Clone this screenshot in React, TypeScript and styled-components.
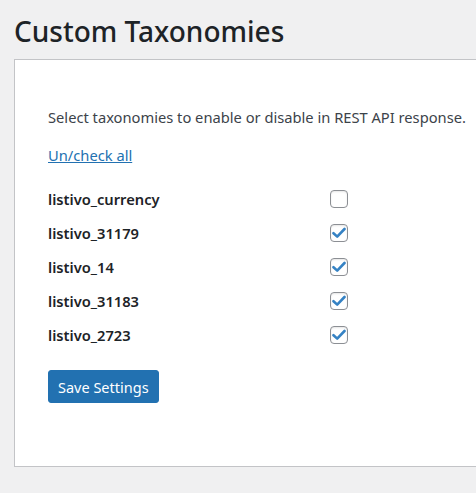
import styled, { createGlobalStyle } from 'styled-components';

const GlobalStyle = createGlobalStyle`
  html, body {
    margin: 0;
    padding: 0;
    background: #f0f0f1;
    overflow: hidden;
  }
  body {
    font-family: "Noto Sans", "Open Sans", sans-serif;
    color: #1d2327;
  }
`;

const Wrap = styled.div`
  padding: 14px 0 0 14px;
  width: 520px;
`;

const Title = styled.h1`
  font-size: 28px;
  font-weight: 500;
  line-height: 34px;
  margin: 0 0 11px;
  color: #1d2327;
`;

const Panel = styled.div`
  background: #fff;
  border: 1px solid #c3c4c7;
  padding: 47px 33px 42px;
  min-height: 317px;
`;

const Description = styled.p`
  font-size: 14.7px;
  line-height: 20px;
  margin: 0 0 17px;
  color: #3c434a;
`;

const ToggleLink = styled.a`
  display: inline-block;
  font-size: 14.7px;
  line-height: 20px;
  color: #2271b1;
  text-decoration: underline;
  cursor: pointer;
  margin-bottom: 17px;
`;

const List = styled.div`
  display: flex;
  flex-direction: column;
  margin-bottom: 18px;
`;

const Row = styled.label`
  display: grid;
  grid-template-columns: 282px 18px;
  align-items: center;
  height: 34px;
`;

const Name = styled.span`
  font-size: 14.7px;
  font-weight: 600;
  color: #1d2327;
`;

const Box = styled.span<{ $checked: boolean }>`
  width: 16px;
  height: 16px;
  border: 1px solid #8c8f94;
  border-radius: 4px;
  background: #fff;
  display: flex;
  align-items: center;
  justify-content: center;
  box-shadow: inset 0 1px 2px rgba(0, 0, 0, 0.1);
  svg {
    display: ${(p) => (p.$checked ? 'block' : 'none')};
  }
`;

const Button = styled.button`
  background: #2271b1;
  color: #fff;
  border: 1px solid #2271b1;
  border-radius: 3px;
  font-family: inherit;
  font-size: 14.5px;
  height: 33px;
  padding: 0 9px;
  cursor: pointer;
`;

const taxonomies = [
  { name: 'listivo_currency', checked: false },
  { name: 'listivo_31179', checked: true },
  { name: 'listivo_14', checked: true },
  { name: 'listivo_31183', checked: true },
  { name: 'listivo_2723', checked: true },
];

const Check = () => (
  <svg width="14" height="12" viewBox="0 0 14 12">
    <path d="M1.5 6.2 L5.2 9.6 L12.5 2" fill="none" stroke="#3582c4" strokeWidth="2.6" strokeLinecap="round" strokeLinejoin="round" />
  </svg>
);

export default function App() {
  return (
    <>
      <GlobalStyle />
      <Wrap>
        <Title>Custom Taxonomies</Title>
        <Panel>
          <Description>Select taxonomies to enable or disable in REST API response.</Description>
          <ToggleLink>Un/check all</ToggleLink>
          <List>
            {taxonomies.map((t) => (
              <Row key={t.name}>
                <Name>{t.name}</Name>
                <Box $checked={t.checked}>
                  <Check />
                </Box>
              </Row>
            ))}
          </List>
          <Button type="button">Save Settings</Button>
        </Panel>
      </Wrap>
    </>
  );
}
